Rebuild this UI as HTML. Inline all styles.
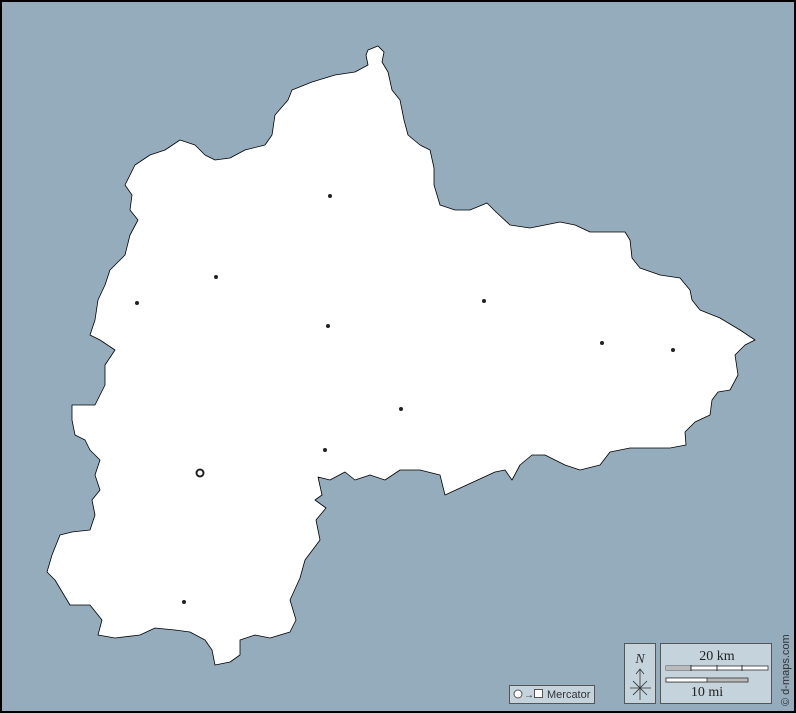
<!DOCTYPE html>
<html><head><style>
html,body{margin:0;padding:0;background:#94acbc;}
svg{display:block}
</style></head><body>
<svg width="796" height="713" viewBox="0 0 796 713" xmlns="http://www.w3.org/2000/svg">
<rect x="0" y="0" width="796" height="713" fill="#94acbc"/>
<polygon fill="#fff" stroke="#000" stroke-width="0.8" stroke-linejoin="round" points="368,50 378,46 384,52 382,62 388,72 392,90 400,100 404,120 408,135 420,145 430,150 434,168 434,185 440,205 455,210 470,210 487,203 496,212 510,225 530,228 560,222 575,225 590,232 610,232 625,232 630,240 632,258 640,268 660,275 680,278 690,290 692,300 700,310 720,318 740,330 755,340 745,345 735,355 738,375 730,390 718,392 712,400 710,415 695,422 685,432 686,445 670,448 650,448 630,448 610,452 600,465 580,470 565,465 545,455 532,455 520,465 512,480 505,470 495,472 445,495 440,475 420,470 400,470 385,480 370,475 355,480 345,472 330,480 318,477 322,495 315,500 326,508 316,520 320,540 305,560 300,578 290,600 296,620 290,632 270,638 255,635 240,640 240,655 230,662 215,665 212,650 205,640 190,632 175,630 155,628 140,635 115,638 98,635 102,620 90,605 70,605 55,580 47,572 52,555 60,535 72,532 90,530 95,515 92,500 100,490 95,475 100,460 90,450 85,440 75,435 72,420 72,405 95,405 100,395 105,385 105,365 115,350 100,340 90,335 95,320 98,300 105,285 110,270 125,255 130,235 138,220 130,210 132,195 125,185 135,165 150,155 165,150 180,140 195,145 205,155 215,160 230,158 245,150 265,145 272,135 275,115 288,100 292,90 312,82 335,75 355,72 368,65 366,55"/>
<g fill="#222">
<circle cx="330" cy="196" r="2"/><circle cx="216" cy="277" r="2"/><circle cx="137" cy="303" r="2"/>
<circle cx="328" cy="326" r="2"/><circle cx="484" cy="301" r="2"/><circle cx="602" cy="343" r="2"/>
<circle cx="673" cy="350" r="2"/><circle cx="401" cy="409" r="2"/><circle cx="325" cy="450" r="2"/>
<circle cx="184" cy="602" r="2"/>
</g>
<circle cx="200" cy="473" r="3.5" fill="#fff" stroke="#222" stroke-width="2"/>
<!-- legend -->
<rect x="509.5" y="685.5" width="85" height="18" fill="#c5d3dc" stroke="#555"/>
<circle cx="518" cy="694" r="4" fill="#fff" stroke="#555"/>
<text x="524" y="698" font-family="Liberation Sans,sans-serif" font-size="10" fill="#333">→</text>
<rect x="534.5" y="689.5" width="8" height="8" fill="#fff" stroke="#555"/>
<text x="547" y="698" font-family="Liberation Sans,sans-serif" font-size="11" fill="#333">Mercator</text>
<rect x="624.5" y="643.5" width="31" height="60" fill="#c5d3dc" stroke="#555"/>
<text x="640" y="663" text-anchor="middle" font-family="Liberation Serif,serif" font-style="italic" font-size="14" fill="#333">N</text>
<path d="M640 670 V700 M636 674 L640 669 L644 674 M630 688 H651 M633 681 L647 695 M647 681 L633 695" stroke="#333" stroke-width="0.8" fill="none"/>
<rect x="660.5" y="643.5" width="111" height="60" fill="#c5d3dc" stroke="#555"/>
<text x="717" y="660" text-anchor="middle" font-family="Liberation Serif,serif" font-size="14" fill="#222">20 km</text>
<rect x="666" y="666" width="102" height="4" fill="#fff" stroke="#333" stroke-width="0.8"/>
<rect x="666" y="666" width="25.5" height="4" fill="#bbb"/>
<path d="M691 665v6M717 665v6M742 665v6" stroke="#333"/>
<rect x="666" y="678" width="82" height="4" fill="#bbb" stroke="#333" stroke-width="0.8"/>
<rect x="666" y="678" width="41" height="4" fill="#fff" stroke="#333" stroke-width="0.8"/>
<text x="707" y="696" text-anchor="middle" font-family="Liberation Serif,serif" font-size="14" fill="#222">10 mi</text>
<text transform="translate(789,706) rotate(-90)" font-family="Liberation Sans,sans-serif" font-size="11" fill="#333">© d-maps.com</text>
<rect x="1" y="1" width="794" height="711" fill="none" stroke="#000" stroke-width="2"/>
</svg>
</body></html>
